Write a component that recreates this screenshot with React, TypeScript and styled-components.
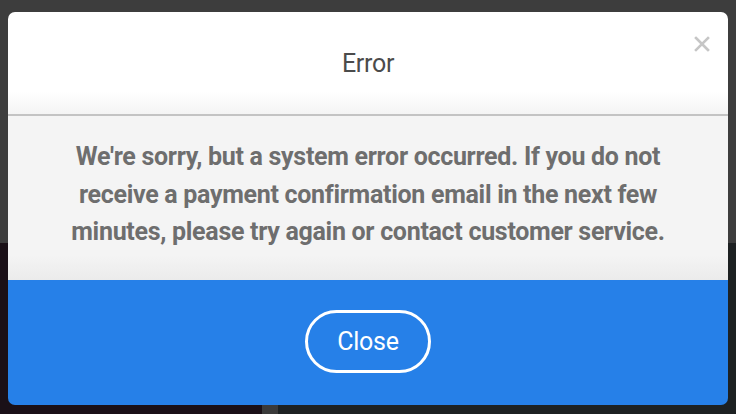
import styled, { createGlobalStyle } from "styled-components";

const GlobalStyle = createGlobalStyle`
  html, body {
    margin: 0;
    padding: 0;
    width: 736px;
    height: 414px;
    overflow: hidden;
    background: #3d3d3d;
  }
  * { box-sizing: border-box; }
`;

export default function App() {
  return (
    <>
      <GlobalStyle />
      <Page>
        <TopArea />
        <Gallery>
          <Tile $tone="#1a1017" $width={262} />
          <Tile $tone="#3a3a3a" $width={16} />
          <Tile $tone="#1d2122" $width={458} />
        </Gallery>

        <Modal role="dialog">
          <Header>
            <Title>Error</Title>
            <CloseIcon aria-label="close">
              <svg width="16" height="16" viewBox="0 0 16 16">
                <path d="M2 2 L14 14 M14 2 L2 14" stroke="#c6c6c6" strokeWidth="2.6" strokeLinecap="square" />
              </svg>
            </CloseIcon>
          </Header>
          <Body>
            <Message>
              We're sorry, but a system error occurred. If you do not receive a payment
              confirmation email in the next few minutes, please try again or contact
              customer service.
            </Message>
          </Body>
          <Footer>
            <PillButton>Close</PillButton>
          </Footer>
        </Modal>
      </Page>
    </>
  );
}

const Page = styled.div`
  position: relative;
  width: 736px;
  height: 414px;
  display: flex;
  flex-direction: column;
`;

const TopArea = styled.div`
  height: 243px;
  background: #3d3d3d;
`;

const Gallery = styled.div`
  flex: 1;
  display: flex;
`;

const Tile = styled.div<{ $tone: string; $width: number }>`
  width: ${(p) => p.$width}px;
  background: ${(p) => p.$tone};
`;

const Modal = styled.div`
  position: absolute;
  left: 8px;
  top: 12px;
  width: 720px;
  height: 393px;
  border-radius: 7px;
  overflow: hidden;
  display: flex;
  flex-direction: column;
  font-family: Roboto, "Liberation Sans", sans-serif;
`;

const Header = styled.div`
  position: relative;
  height: 104px;
  background: linear-gradient(#ffffff 0%, #ffffff 78%, #f4f4f4 100%);
  border-bottom: 2px solid #c3c3c3;
  display: flex;
  align-items: center;
  justify-content: center;
  padding-bottom: 0;
`;

const Title = styled.h1`
  margin: 0;
  font-size: 25px;
  font-weight: 400;
  color: #4b4b4b;
  letter-spacing: -0.3px;
`;

const CloseIcon = styled.div`
  position: absolute;
  top: 24px;
  right: 18px;
  width: 16px;
  height: 16px;
  display: flex;
  cursor: pointer;
`;

const Body = styled.div`
  height: 164px;
  background: linear-gradient(#f4f4f4 0%, #f4f4f4 85%, #ebebeb 100%);
  display: flex;
  justify-content: center;
  padding-top: 22px;
`;

const Message = styled.p`
  margin: 0;
  width: 600px;
  text-align: center;
  font-size: 25px;
  line-height: 37.5px;
  font-weight: 700;
  color: #6e6e6e;
  letter-spacing: -0.3px;
`;

const Footer = styled.div`
  flex: 1;
  background: #2680e8;
  display: flex;
  align-items: center;
  justify-content: center;
  padding-bottom: 3px;
`;

const PillButton = styled.button`
  width: 126px;
  height: 63px;
  border: 3px solid #ffffff;
  border-radius: 32px;
  background: transparent;
  color: #ffffff;
  font-family: Roboto, "Liberation Sans", sans-serif;
  font-size: 25px;
  font-weight: 400;
  letter-spacing: -0.3px;
  cursor: pointer;
`;
